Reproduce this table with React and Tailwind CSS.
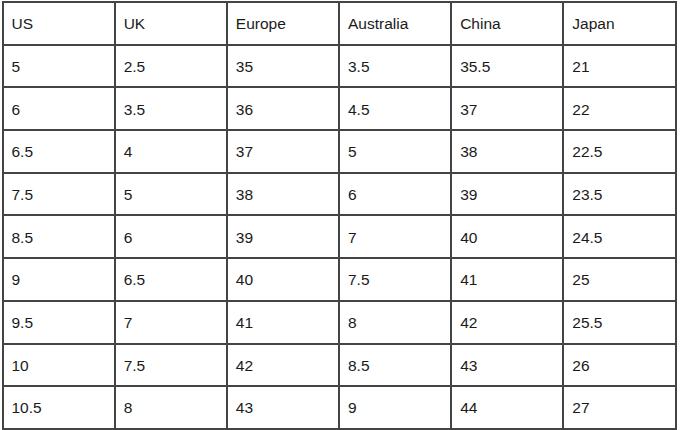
import React from "react"

const header = ["US", "UK", "Europe", "Australia", "China", "Japan"]

const rows = [
  ["5", "2.5", "35", "3.5", "35.5", "21"],
  ["6", "3.5", "36", "4.5", "37", "22"],
  ["6.5", "4", "37", "5", "38", "22.5"],
  ["7.5", "5", "38", "6", "39", "23.5"],
  ["8.5", "6", "39", "7", "40", "24.5"],
  ["9", "6.5", "40", "7.5", "41", "25"],
  ["9.5", "7", "41", "8", "42", "25.5"],
  ["10", "7.5", "42", "8.5", "43", "26"],
  ["10.5", "8", "43", "9", "44", "27"],
]

export default function App() {
  return (
    <div className="w-[680px] h-[430px] bg-white pt-px pl-[1.5px]">
      <table
        className="w-[675px] h-[427px] border-collapse table-fixed text-[15.5px] text-[#1a1a1a]"
        style={{ fontFamily: '"Liberation Sans", Arial, sans-serif' }}
      >
        <tbody>
          {[header, ...rows].map((row, i) => (
            <tr key={i} className="h-[42.7px]">
              {row.map((cell, j) => (
                <td key={j} className="border-2 border-[#444] pl-2 pr-2 pt-px align-middle">
                  {cell}
                </td>
              ))}
            </tr>
          ))}
        </tbody>
      </table>
    </div>
  )
}
